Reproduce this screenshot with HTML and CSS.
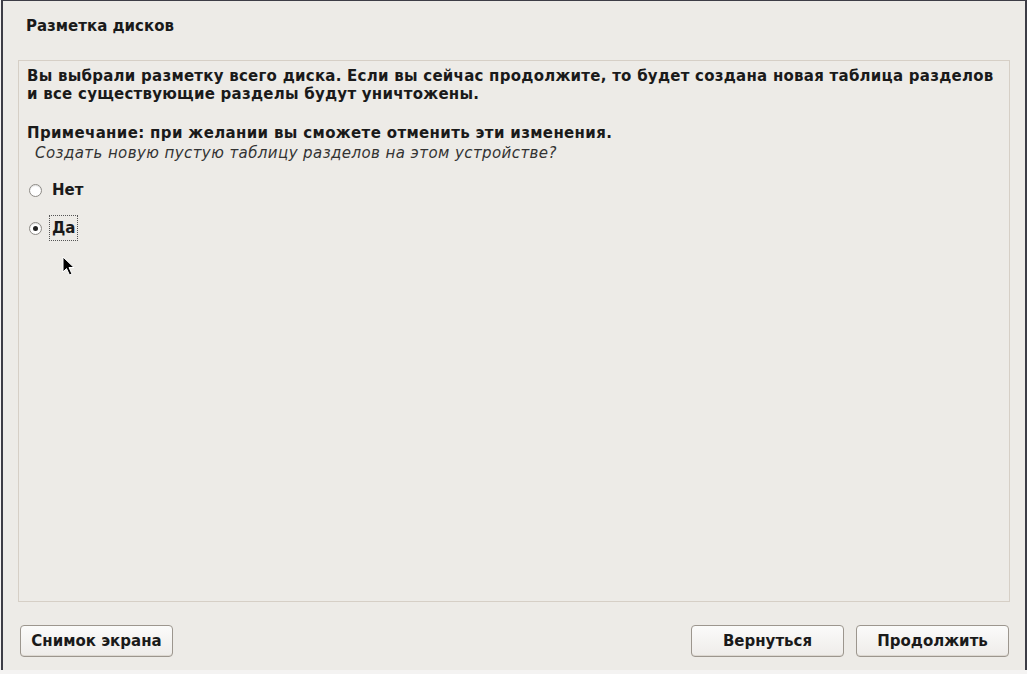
FILE: index.html
```html
<!DOCTYPE html>
<html lang="ru">
<head>
<meta charset="utf-8">
<title>Разметка дисков</title>
<link rel="stylesheet" href="styles.css">
</head>
<body>
<div class="window">
  <div class="title">Разметка дисков</div>
  <div class="content">
    <p class="msg">Вы выбрали разметку всего диска. Если вы сейчас продолжите, то будет создана новая таблица разделов<br>и все существующие разделы будут уничтожены.</p>
    <p class="note">Примечание: при желании вы сможете отменить эти изменения.</p>
    <p class="question">Создать новую пустую таблицу разделов на этом устройстве?</p>
    <div class="options">
      <label class="option"><span class="radio"></span><span class="label">Нет</span></label>
      <label class="option"><span class="radio checked"></span><span class="label focus">Да</span></label>
    </div>
    <svg class="cursor" width="14" height="21" viewBox="0 0 14 21"><path d="M1 1 L1 16 L4.5 12.5 L7.5 19 L10 18 L7 11.5 L12 11.5 Z" fill="#000" stroke="#fff" stroke-width="1"/></svg>
  </div>
  <div class="buttons">
    <button class="btn">Снимок экрана</button>
    <div class="spacer"></div>
    <button class="btn">Вернуться</button>
    <button class="btn">Продолжить</button>
  </div>
</div>
</body>
</html>
```
FILE: styles.css
```css
html, body {
  margin: 0;
  padding: 0;
  background: #f4f3f2;
}
body {
  width: 1027px;
  height: 674px;
  overflow: hidden;
  font-family: "DejaVu Sans", "Liberation Sans", sans-serif;
  color: #1a1a1a;
}
.window {
  box-sizing: border-box;
  width: 1026px;
  height: 670px;
  margin-left: 1px;
  border-left: 2px solid #3d3d46;
  border-top: 1px solid #3d3d46;
  border-right: 2px solid #3d3d46;
  background: #edebe7;
  display: flex;
  flex-direction: column;
}
.title {
  font-weight: bold;
  font-size: 15px;
  line-height: 18px;
  padding: 16px 0 0 23px;
  height: 41px;
  box-sizing: border-box;
}
.content {
  position: relative;
  margin: 18px 0 0 15px;
  width: 992px;
  height: 542px;
  box-sizing: border-box;
  border: 1px solid #d6cfc6;
  padding: 6px 0 0 8px;
}
.content p {
  margin: 0;
  font-size: 15px;
  line-height: 18px;
  letter-spacing: 0.25px;
  white-space: nowrap;
}
.msg, .note {
  font-weight: bold;
}
.note {
  margin-top: 21px !important;
  letter-spacing: 0.35px !important;
}
.question {
  font-style: italic;
  color: #333;
  padding-left: 8px;
  margin-top: 2px !important;
  letter-spacing: 0.42px !important;
}
.options {
  display: flex;
  flex-direction: column;
  gap: 14px;
  margin-top: 16px;
  padding-left: 2px;
}
.option {
  display: flex;
  align-items: center;
  gap: 7px;
  height: 24px;
  font-weight: bold;
  font-size: 15px;
}
.radio {
  width: 13px;
  height: 13px;
  border: 1px solid #8d8a85;
  border-radius: 50%;
  background: #fff;
  position: relative;
  box-sizing: border-box;
  box-shadow: inset 0 1px 1px rgba(0,0,0,0.12);
}
.radio.checked::after {
  content: "";
  position: absolute;
  left: 3px;
  top: 3px;
  width: 5px;
  height: 5px;
  border-radius: 50%;
  background: #222;
}
.label {
  padding: 3px 2px;
  border: 1px dotted transparent;
}
.label.focus {
  border-color: #555;
}
.cursor {
  position: absolute;
  left: 43px;
  top: 195px;
}
.buttons {
  display: flex;
  align-items: center;
  gap: 12px;
  padding: 23px 16px 0 17px;
}
.spacer {
  flex: 1;
}
.btn {
  width: 153px;
  height: 32px;
  font-family: "DejaVu Sans", "Liberation Sans", sans-serif;
  font-weight: bold;
  font-size: 15px;
  color: #1a1a1a;
  border: 1px solid #9c968e;
  border-radius: 4px;
  background: linear-gradient(#fbfbfa, #eeece9);
  box-shadow: inset 0 -1px 0 #ddd8d1;
  padding: 0;
}
```
